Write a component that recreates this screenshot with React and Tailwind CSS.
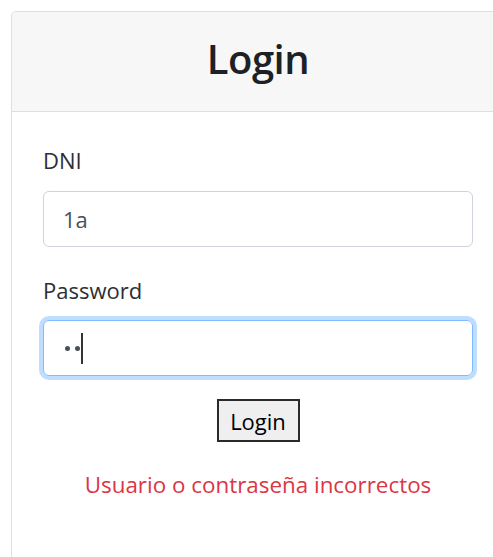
import React from "react";

// Login card: header with title, DNI + password fields, submit button and error message
const App = () => {
  return (
    <div
      className="h-screen w-full overflow-hidden bg-white pl-[11px] pt-[11px] text-[#212529]"
      style={{ fontFamily: '"Open Sans", "Noto Sans", sans-serif' }}
    >
      <div className="w-[494px] min-h-[600px] rounded-[5px] border border-[#dfdfdf] bg-white">
        <div className="flex h-[100px] items-center justify-center rounded-t-[5px] border-b border-[#dfdfdf] bg-[#f7f7f7] pb-[5px]">
          <h1 className="text-[40px] font-semibold leading-none tracking-[-0.5px] text-[#1d2125]">Login</h1>
        </div>

        <form className="px-[31px] pt-[30px]" onSubmit={(e) => e.preventDefault()}>
          <div className="mb-[25px]">
            <label className="mb-[13px] block text-[22px] leading-[36px] text-[#2b2f33]">DNI</label>
            <input
              type="text"
              value="1a"
              readOnly
              className="block h-[56px] w-full rounded-[6px] border border-[#ced4da] px-[19px] text-[22px] text-[#495057] outline-none"
            />
          </div>

          <div className="mb-[23px]">
            <label className="mb-[12px] block text-[22px] leading-[36px] text-[#2b2f33]">Password</label>
            <div className="flex h-[56px] w-full items-center rounded-[6px] border border-[#80bdff] px-[21px] shadow-[0_0_0_4px_rgba(0,123,255,0.25)]">
              <span className="mr-[5px] h-[5px] w-[5px] rounded-full bg-[#495057]" />
              <span className="mr-[1px] h-[5px] w-[5px] rounded-full bg-[#495057]" />
              <span className="h-[31px] w-[2px] bg-[#333]" />
            </div>
          </div>

          <div className="flex justify-center">
            <button
              type="submit"
              className="h-[43px] w-[83px] border-2 border-[#2a2a2a] bg-[#efefef] text-[22px] leading-none text-black"
            >
              Login
            </button>
          </div>

          <p className="mt-[25px] text-center text-[22.4px] leading-[36px] text-[#dc3545]">
            Usuario o contraseña incorrectos
          </p>
        </form>
      </div>
    </div>
  );
};

export default App;
